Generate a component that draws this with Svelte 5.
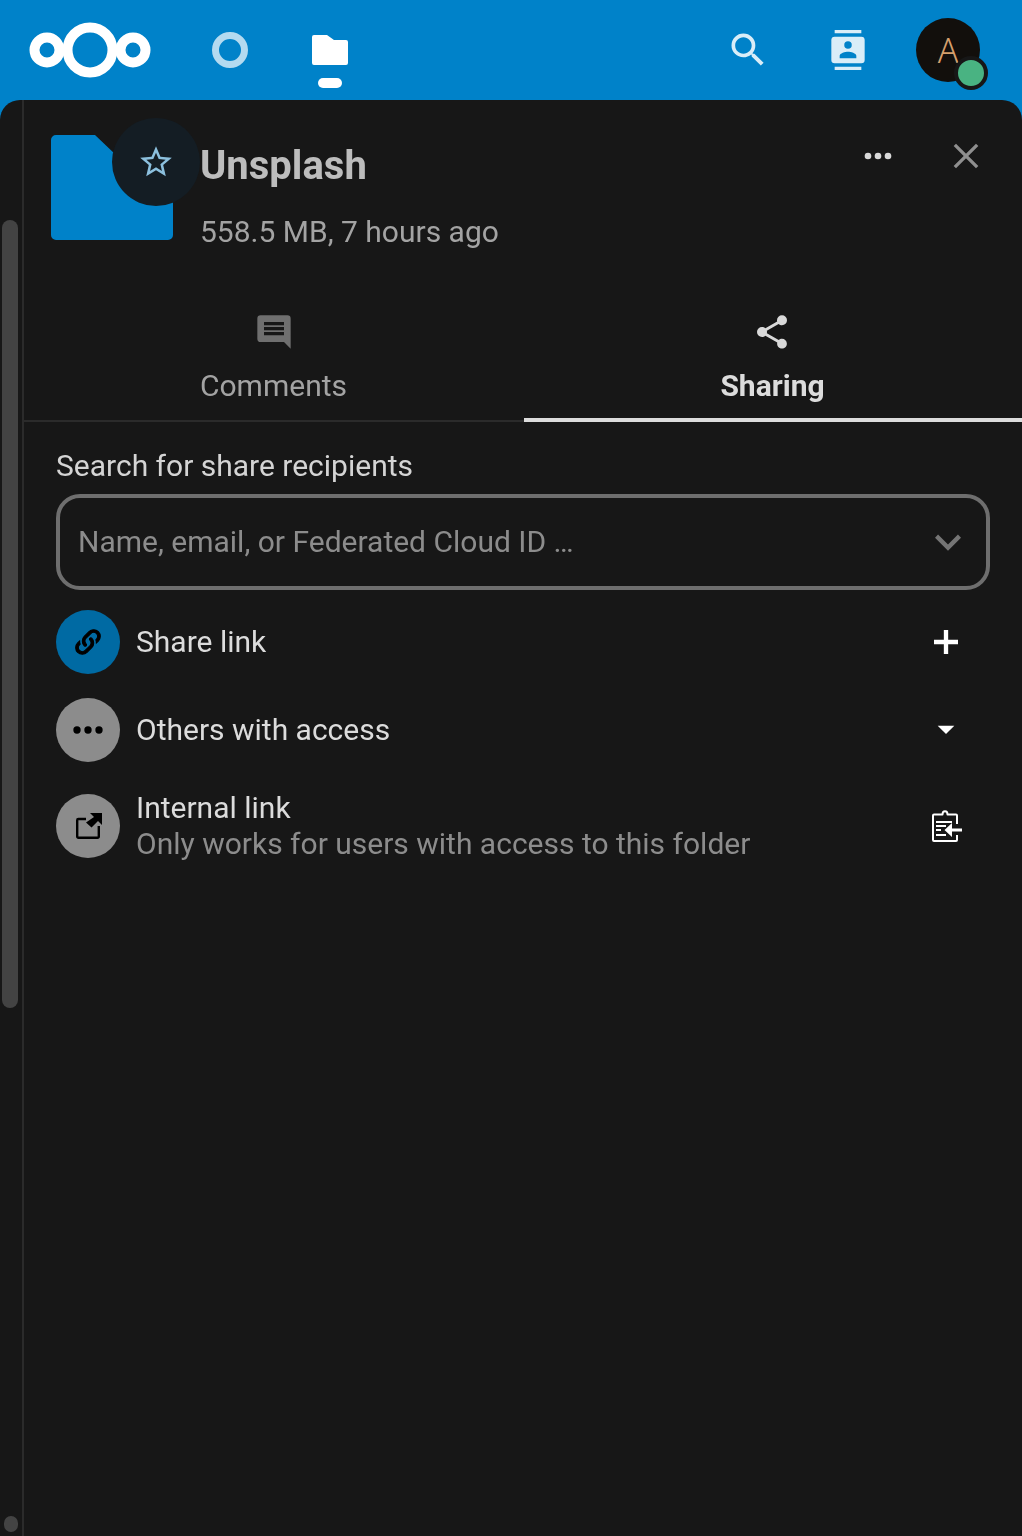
<script>
  const rows = [
    { kind: 'link', title: 'Share link', action: 'plus' },
    { kind: 'others', title: 'Others with access', action: 'caret' },
    { kind: 'internal', title: 'Internal link', sub: 'Only works for users with access to this folder', action: 'clip' }
  ];
  const dots = 'M16,12A2,2 0 0,1 18,10A2,2 0 0,1 20,12A2,2 0 0,1 18,14A2,2 0 0,1 16,12M10,12A2,2 0 0,1 12,10A2,2 0 0,1 14,12A2,2 0 0,1 12,14A2,2 0 0,1 10,12M4,12A2,2 0 0,1 6,10A2,2 0 0,1 8,12A2,2 0 0,1 6,14A2,2 0 0,1 4,12Z';
</script>

<div class="page">
  <header>
    <svg class="logo" viewBox="0 0 122 56" width="122" height="56">
      <g fill="none" stroke="#fff" stroke-width="10">
        <circle cx="61" cy="28" r="22.5" />
        <circle cx="18" cy="28" r="12.5" />
        <circle cx="104" cy="28" r="12.5" />
      </g>
    </svg>
    <nav>
      <div class="app dim">
        <svg viewBox="0 0 36 36" width="36" height="36"><circle cx="18" cy="18" r="14.5" fill="none" stroke="#b3daf0" stroke-width="7" /></svg>
      </div>
      <div class="app active">
        <svg viewBox="0 0 36 30" width="36" height="30"><path d="M2 0H15L22 5H34A2 2 0 0 1 36 7V28A2 2 0 0 1 34 30H2A2 2 0 0 1 0 28V2A2 2 0 0 1 2 0Z" fill="#fff" /></svg>
        <span class="pill"></span>
      </div>
    </nav>
    <div class="right">
      <svg class="tool search-tool" viewBox="0 0 24 24" width="44" height="44"><path fill="#d9edf8" d="M9.5,3A6.5,6.5 0 0,1 16,9.5C16,11.11 15.41,12.59 14.44,13.73L14.71,14H15.5L20.5,19L19,20.5L14,15.5V14.71L13.73,14.44C12.59,15.41 11.11,16 9.5,16A6.5,6.5 0 0,1 3,9.5A6.5,6.5 0 0,1 9.5,3M9.5,5C7,5 5,7 5,9.5C5,12 7,14 9.5,14C12,14 14,12 14,9.5C14,7 12,5 9.5,5Z" /></svg>
      <svg class="tool" viewBox="0 0 24 24" width="40" height="40"><path fill="#d9edf8" d="M20,0H4V2H20V0M4,24H20V22H4V24M20,4H4A2,2 0 0,0 2,6V18A2,2 0 0,0 4,20H20A2,2 0 0,0 22,18V6A2,2 0 0,0 20,4M12,6.75A2.25,2.25 0 0,1 14.25,9A2.25,2.25 0 0,1 12,11.25A2.25,2.25 0 0,1 9.75,9A2.25,2.25 0 0,1 12,6.75M17,17H7V15.5C7,13.83 10.33,13 12,13C13.67,13 17,13.83 17,15.5V17Z" /></svg>
      <div class="avatar">
        <span>A</span>
        <i class="status"></i>
      </div>
    </div>
  </header>

  <main>
    <div class="rail">
      <div class="thumb"></div>
      <div class="thumb-end"></div>
    </div>
    <section class="sidebar">
      <div class="head">
        <div class="folder-wrap">
          <svg class="folder" viewBox="0 0 122 106" width="122" height="106"><path fill="#0082c9" d="M5 0H44L65 20H117A5 5 0 0 1 122 25V100A5 5 0 0 1 117 105H5A5 5 0 0 1 0 100V5A5 5 0 0 1 5 0Z" /></svg>
          <div class="star">
            <svg viewBox="0 0 24 24" width="38" height="38"><path fill="#8cc0de" d="M12,15.39L8.24,17.66L9.23,13.38L5.91,10.5L10.29,10.13L12,6.09L13.71,10.13L18.09,10.5L14.77,13.38L15.76,17.66M22,9.24L14.81,8.63L12,2L9.19,8.63L2,9.24L7.45,13.97L5.82,21L12,17.27L18.18,21L16.54,13.97L22,9.24Z" /></svg>
          </div>
        </div>
        <div class="titles">
          <h1>Unsplash</h1>
          <p>558.5 MB, 7 hours ago</p>
        </div>
        <div class="head-actions">
          <svg viewBox="0 0 24 24" width="40" height="40"><path fill="#d9d9d9" d={dots} /></svg>
          <svg viewBox="0 0 24 24" width="40" height="40"><path fill="none" stroke="#8f8f8f" stroke-width="2" d="M5.3 5.3L18.7 18.7M18.7 5.3L5.3 18.7" /></svg>
        </div>
      </div>

      <div class="tabs">
        <div class="tab">
          <svg viewBox="0 0 24 24" width="40" height="40"><path fill="#6f6f6f" d="M18,8H6V6H18V8M18,11H6V9H18V11M18,14H6V12H18V14M22,4A2,2 0 0,0 20,2H4A2,2 0 0,0 2,4V16A2,2 0 0,0 4,18H18L22,22V4Z" /></svg>
          <span>Comments</span>
        </div>
        <div class="tab on">
          <svg viewBox="0 0 24 24" width="40" height="40"><path fill="#d9d9d9" d="M18,16.08C17.24,16.08 16.56,16.38 16.04,16.85L8.91,12.7C8.96,12.47 9,12.24 9,12C9,11.76 8.96,11.53 8.91,11.3L15.96,7.19C16.5,7.69 17.21,8 18,8A3,3 0 0,0 21,5A3,3 0 0,0 18,2A3,3 0 0,0 15,5C15,5.24 15.04,5.47 15.09,5.7L8.04,9.81C7.5,9.31 6.79,9 6,9A3,3 0 0,0 3,12A3,3 0 0,0 6,15C6.79,15 7.5,14.69 8.04,14.19L15.16,18.34C15.11,18.55 15.08,18.77 15.08,19C15.08,20.61 16.39,21.91 18,21.91C19.61,21.91 20.92,20.61 20.92,19A2.92,2.92 0 0,0 18,16.08Z" /></svg>
          <span>Sharing</span>
        </div>
      </div>

      <div class="sharing">
        <div class="search-label">Search for share recipients</div>
        <div class="search">
          <span>Name, email, or Federated Cloud ID …</span>
          <svg viewBox="0 0 24 24" width="52" height="52"><path fill="#757575" d="M7.41,8.58L12,13.17L16.59,8.58L18,10L12,16L6,10L7.41,8.58Z" /></svg>
        </div>

        {#each rows as row}
          <div class="row {row.kind}">
            <div class="circle">
              {#if row.kind === 'link'}
                <svg viewBox="0 0 24 24" width="32" height="32"><path fill="#000" stroke="#000" stroke-width="0.8" d="M10.59,13.41C11,13.8 11,14.44 10.59,14.83C10.2,15.22 9.56,15.22 9.17,14.83C7.22,12.88 7.22,9.71 9.17,7.76V7.76L12.71,4.22C14.66,2.27 17.83,2.27 19.78,4.22C21.73,6.17 21.73,9.34 19.78,11.29L18.29,12.78C18.3,11.96 18.17,11.14 17.89,10.36L18.36,9.88C19.54,8.71 19.54,6.81 18.36,5.64C17.19,4.46 15.29,4.46 14.12,5.64L10.59,9.17C9.41,10.34 9.41,12.24 10.59,13.41M13.41,9.17C13.8,8.78 14.44,8.78 14.83,9.17C16.78,11.12 16.78,14.29 14.83,16.24V16.24L11.29,19.78C9.34,21.73 6.17,21.73 4.22,19.78C2.27,17.83 2.27,14.66 4.22,12.71L5.71,11.22C5.7,12.04 5.83,12.86 6.11,13.65L5.64,14.12C4.46,15.29 4.46,17.19 5.64,18.36C6.81,19.54 8.71,19.54 9.88,18.36L13.41,14.83C14.59,13.66 14.59,11.76 13.41,10.59C13,10.2 13,9.56 13.41,9.17Z" /></svg>
              {:else if row.kind === 'others'}
                <svg viewBox="0 0 24 24" width="44" height="44"><path fill="#000" d={dots} /></svg>
              {:else}
                <svg class="ext" viewBox="0 0 26 26" width="26" height="26">
                  <path fill="none" stroke="#000" stroke-width="2.4" stroke-linejoin="round" d="M10 6H2.4A1.2 1.2 0 0 0 1.2 7.2V23.6A1.2 1.2 0 0 0 2.4 24.8H21.6A1.2 1.2 0 0 0 22.8 23.6V13" />
                  <path fill="#000" d="M14 0H26V12L22 8L15.5 14.5L10 9.5L18 4Z" />
                </svg>
              {/if}
            </div>
            <div class="text">
              <div class="title">{row.title}</div>
              {#if row.sub}<div class="sub">{row.sub}</div>{/if}
            </div>
            <div class="action">
              {#if row.action === 'plus'}
                <svg viewBox="0 0 24 24" width="40" height="40"><path fill="#fff" d="M19.2,13.3H13.3V19.2H10.7V13.3H4.8V10.7H10.7V4.8H13.3V10.7H19.2Z" /></svg>
              {:else if row.action === 'caret'}
                <svg class="caret" viewBox="0 0 24 24" width="40" height="40"><path fill="#fff" d="M7,10L12,15L17,10H7Z" /></svg>
              {:else}
                <svg class="clip" viewBox="0 0 30 32" width="30" height="32">
                  <path fill="none" stroke="#fff" stroke-width="2" stroke-linejoin="round" d="M8.5 4.5H10.5C10.5 0 15.5 0 15.5 4.5H24C24.6 4.5 25 4.9 25 5.5V14M25 25V30C25 30.6 24.6 31 24 31H2C1.4 31 1 30.6 1 30V5.5C1 4.9 1.4 4.5 2 4.5H8.5" />
                  <path fill="none" stroke="#fff" stroke-width="2" d="M4 12H20M4 16H14M4 20H9M4 25H14" />
                  <path fill="#fff" d="M30 18.4V21.6H20V27L12.5 20L20 13V18.4Z" />
                </svg>
              {/if}
            </div>
          </div>
        {/each}
      </div>
    </section>
  </main>
</div>

<style>
  :global(body) {
    margin: 0;
    background: #0082c9;
  }

  .page {
    width: 1022px;
    height: 1536px;
    font-family: Roboto, sans-serif;
    font-size: 30px;
    display: flex;
    flex-direction: column;
    overflow: hidden;
  }

  header {
    height: 100px;
    flex: none;
    display: flex;
    align-items: center;
    padding-left: 29px;
    padding-right: 42px;
  }

  .logo {
    display: block;
  }

  nav {
    display: flex;
    margin-left: 39px;
  }

  .app {
    width: 100px;
    height: 100px;
    display: flex;
    align-items: center;
    justify-content: center;
    position: relative;
  }

  .app:first-child {
    width: 80px;
    margin-right: 10px;
  }

  .pill {
    position: absolute;
    left: 38px;
    bottom: 12px;
    width: 24px;
    height: 10px;
    border-radius: 5px;
    background: #fff;
  }

  .right {
    margin-left: auto;
    display: flex;
    align-items: center;
  }

  .tool {
    display: block;
    margin-right: 48px;
  }

  .search-tool {
    margin-right: 58px;
  }

  .avatar {
    width: 64px;
    height: 64px;
    border-radius: 50%;
    background: #120f0c;
    color: #d59f6c;
    display: flex;
    align-items: center;
    justify-content: center;
    position: relative;
    font-family: "Noto Sans", sans-serif;
    font-weight: 300;
    font-size: 34px;
  }

  .status {
    position: absolute;
    right: -8px;
    bottom: -8px;
    width: 26px;
    height: 26px;
    border: 4px solid #171717;
    border-radius: 50%;
    background: #49b382;
  }

  main {
    flex: 1;
    display: flex;
    background: #171717;
    border-radius: 20px 20px 0 0;
    overflow: hidden;
  }

  .rail {
    width: 22px;
    flex: none;
    border-right: 2px solid #2b2b2b;
    position: relative;
  }

  .thumb {
    position: absolute;
    left: 2px;
    top: 120px;
    width: 16px;
    height: 788px;
    border-radius: 8px;
    background: #434343;
  }

  .thumb-end {
    position: absolute;
    left: 4px;
    top: 1416px;
    width: 14px;
    height: 16px;
    border-radius: 8px;
    background: #434343;
  }

  .sidebar {
    flex: 1;
    min-width: 0;
    will-change: transform;
  }

  .head {
    display: flex;
    height: 198px;
    padding-left: 27px;
    padding-right: 36px;
  }

  .folder-wrap {
    position: relative;
    width: 122px;
    padding-top: 35px;
  }

  .folder {
    display: block;
  }

  .star {
    position: absolute;
    left: 61px;
    top: 18px;
    width: 88px;
    height: 88px;
    border-radius: 50%;
    background: #141d24;
    display: flex;
    align-items: center;
    justify-content: center;
  }

  .titles {
    margin-left: 27px;
    padding-top: 41px;
  }

  h1 {
    margin: 0;
    font-size: 40px;
    line-height: 50px;
    font-weight: 700;
    color: #bdbdbd;
  }

  .titles p {
    margin: 21px 0 0;
    line-height: 40px;
    color: #a3a3a3;
  }

  .head-actions {
    margin-left: auto;
    display: flex;
    gap: 48px;
    padding-top: 36px;
  }

  .tabs {
    display: flex;
    height: 122px;
    border-bottom: 2px solid #2b2b2b;
  }

  .tab {
    flex: 1;
    display: flex;
    flex-direction: column;
    align-items: center;
    padding-top: 14px;
    color: #a3a3a3;
    line-height: 40px;
    box-sizing: border-box;
    height: 124px;
  }

  .tab:first-child {
    flex: 0 0 500px;
  }

  .tab span {
    margin-top: 14px;
    margin-left: -1px;
  }

  .tab.on {
    color: #dcdcdc;
    font-weight: 700;
    border-bottom: 4px solid #dcdcdc;
  }

  .tab.on svg {
    margin-right: 2px;
  }

  .sharing {
    padding: 24px 32px 0;
  }

  .search-label {
    color: #d4d4d4;
    line-height: 40px;
    margin-bottom: 8px;
  }

  .search {
    height: 96px;
    box-sizing: border-box;
    border: 4px solid #6e6e6e;
    border-radius: 24px;
    display: flex;
    align-items: center;
    justify-content: space-between;
    padding: 0 12px 0 18px;
    color: #8c8c8c;
    margin-bottom: 8px;
  }

  .search span {
    margin-bottom: 2px;
  }

  .row {
    display: flex;
    align-items: center;
    height: 88px;
    color: #dcdcdc;
  }

  .row.internal {
    height: 104px;
  }

  .circle {
    width: 64px;
    height: 64px;
    border-radius: 50%;
    background: #8c8c8c;
    flex: none;
    display: flex;
    align-items: center;
    justify-content: center;
  }

  .ext {
    margin-left: 2px;
  }

  .link .circle {
    background: #006aa3;
  }

  .text {
    margin-left: 16px;
    line-height: 36px;
    flex: 1;
  }

  .sub {
    color: #8c8c8c;
  }

  .action {
    width: 40px;
    display: flex;
    align-items: center;
    justify-content: center;
    margin-right: 24px;
  }

  .caret {
    margin-bottom: 2px;
  }

  .clip {
    margin-left: 2px;
    flex: none;
  }
</style>
